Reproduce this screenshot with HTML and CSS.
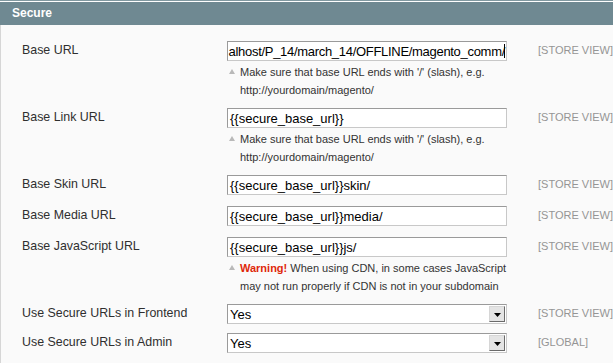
FILE: index.html
```html
<!DOCTYPE html>
<html lang="en">

<head>
	<meta charset="utf-8">
	<title>Secure</title>
	<link rel="stylesheet" href="styles.css">
</head>

<body>
	<div class="sektion">
		<div class="hoved">Secure</div>

		<div class="felter">
			<div class="raekke">
				<label class="navn">Base URL</label>
				<div class="vaerdi">
					<div class="felt aktiv"><span>alhost/P_14/march_14/OFFLINE/magento_comm/</span><span class="markoer"></span></div>
					<p class="note"><span class="pil"></span>Make sure that base URL ends with '/' (slash), e.g.<br>http://yourdomain/magento/</p>
				</div>
				<span class="scope">[STORE VIEW]</span>
			</div>

			<div class="raekke">
				<label class="navn">Base Link URL</label>
				<div class="vaerdi">
					<div class="felt">{{secure_base_url}}</div>
					<p class="note"><span class="pil"></span>Make sure that base URL ends with '/' (slash), e.g.<br>http://yourdomain/magento/</p>
				</div>
				<span class="scope">[STORE VIEW]</span>
			</div>

			<div class="raekke">
				<label class="navn">Base Skin URL</label>
				<div class="vaerdi">
					<div class="felt">{{secure_base_url}}skin/</div>
				</div>
				<span class="scope">[STORE VIEW]</span>
			</div>

			<div class="raekke">
				<label class="navn">Base Media URL</label>
				<div class="vaerdi">
					<div class="felt">{{secure_base_url}}media/</div>
				</div>
				<span class="scope">[STORE VIEW]</span>
			</div>

			<div class="raekke">
				<label class="navn">Base JavaScript URL</label>
				<div class="vaerdi">
					<div class="felt">{{secure_base_url}}js/</div>
					<p class="note"><span class="pil"></span><strong class="advarsel">Warning!</strong> When using CDN, in some cases JavaScript<br>may not run properly if CDN is not in your subdomain</p>
				</div>
				<span class="scope">[STORE VIEW]</span>
			</div>

			<div class="raekke valg">
				<label class="navn">Use Secure URLs in Frontend</label>
				<div class="vaerdi">
					<div class="felt dropdown">Yes<span class="knap"><svg width="7" height="4" viewBox="0 0 7 4"><path d="M0 0h7L3.5 4z" fill="#000"/></svg></span></div>
				</div>
				<span class="scope">[STORE VIEW]</span>
			</div>

			<div class="raekke valg">
				<label class="navn">Use Secure URLs in Admin</label>
				<div class="vaerdi">
					<div class="felt dropdown">Yes<span class="knap"><svg width="7" height="4" viewBox="0 0 7 4"><path d="M0 0h7L3.5 4z" fill="#000"/></svg></span></div>
				</div>
				<span class="scope">[GLOBAL]</span>
			</div>
		</div>
	</div>
</body></html>
```

FILE: styles.css
```css
body {
	margin: 0;
	background: #fafafa;
	font-family: 'Liberation Sans', Arial, sans-serif;
	overflow: hidden;
}

.sektion {
	border-top: 1px solid #8199a1;
}

.hoved {
	border-top: 1px solid #fff;
	background: #6f8992;
	color: #fff;
	font-size: 12px;
	font-weight: bold;
	height: 23px;
	line-height: 23px;
	padding-left: 12px;
}

.felter {
	border-left: 1px solid #d6d6d6;
	padding-top: 16px;
	height: 330px;
}

.raekke {
	display: grid;
	grid-template-columns: 226px 280px auto;
	padding-bottom: 11px;
}

.raekke.valg {
	padding-bottom: 9px;
}

.navn {
	padding-left: 21px;
	font-size: 12.4px;
	line-height: 19px;
	color: #2f2f2f;
}

.felt {
	height: 18px;
	line-height: 19px;
	border: 1px solid;
	border-color: #9a9a9a #c8c8c8 #c8c8c8 #9a9a9a;
	background: #fff;
	font-size: 13px;
	color: #000;
	padding-left: 2px;
	white-space: nowrap;
	overflow: hidden;
}

.felt.aktiv {
	display: flex;
	justify-content: flex-end;
	align-items: center;
	padding-right: 1px;
	letter-spacing: -0.3px;
}

.markoer {
	flex: none;
	width: 1px;
	height: 14px;
	background: #000;
	margin-left: -1px;
}

.dropdown {
	position: relative;
}

.knap {
	position: absolute;
	right: 1px;
	top: 1px;
	width: 14px;
	height: 14px;
	background: #e4e4e4;
	border: 1px solid;
	border-color: #d6d6d6 #6a6a6a #6a6a6a #d6d6d6;
	display: flex;
	align-items: center;
	justify-content: center;
}

.knap svg {
	margin-top: 1px;
}

.note {
	margin: 2px 0 -2px;
	font-size: 11px;
	line-height: 18px;
	color: #333;
	padding-left: 13px;
	position: relative;
}

.pil {
	position: absolute;
	left: 2px;
	top: 6px;
	border-left: 3px solid transparent;
	border-right: 3px solid transparent;
	border-bottom: 5px solid #b9b9b9;
}

.advarsel {
	color: #df280a;
}

.scope {
	padding-left: 31px;
	font-size: 11px;
	line-height: 19px;
	color: #959595;
}
```
